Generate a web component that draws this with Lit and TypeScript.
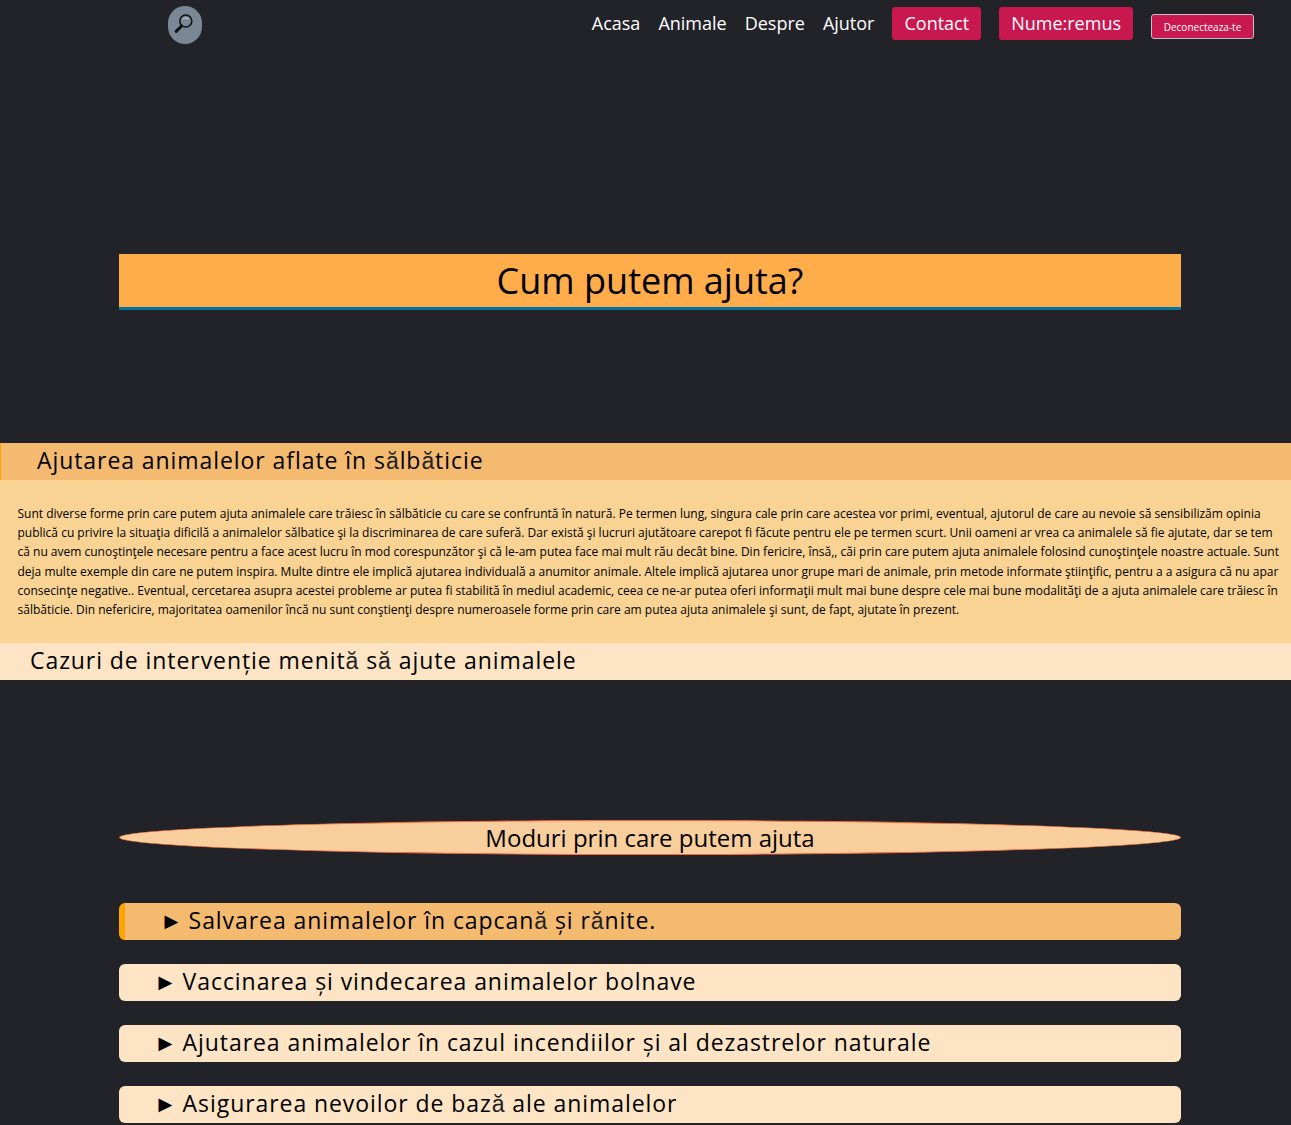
import { LitElement, html, css } from 'lit';
import { customElement } from 'lit/decorators.js';

const PARAGRAPH =
  'Sunt diverse forme prin care putem ajuta animalele care trăiesc în sălbăticie cu care se confruntă în natură. Pe termen lung, singura cale prin care acestea vor primi, eventual, ajutorul de care au nevoie să sensibilizăm opinia publică cu privire la situaţia dificilă a animalelor sălbatice şi la discriminarea de care suferă. Dar există şi lucruri ajutătoare carepot fi făcute pentru ele pe termen scurt. Unii oameni ar vrea ca animalele să fie ajutate, dar se tem că nu avem cunoştinţele necesare pentru a face acest lucru în mod corespunzător şi că le-am putea face mai mult rău decât bine. Din fericire, însă,, căi prin care putem ajuta animalele folosind cunoştinţele noastre actuale. Sunt deja multe exemple din care ne putem inspira. Multe dintre ele implică ajutarea individuală a anumitor animale. Altele implică ajutarea unor grupe mari de animale, prin metode informate ştiinţific, pentru a a asigura că nu apar consecinţe negative.. Eventual, cercetarea asupra acestei probleme ar putea fi stabilită în mediul academic, ceea ce ne-ar putea oferi informaţii mult mai bune despre cele mai bune modalităţi de a ajuta animalele care trăiesc în sălbăticie. Din nefericire, majoritatea oamenilor încă nu sunt conştienţi despre numeroasele forme prin care am putea ajuta animalele şi sunt, de fapt, ajutate în prezent.';

const WAYS = [
  'Salvarea animalelor în capcană și rănite.',
  'Vaccinarea și vindecarea animalelor bolnave',
  'Ajutarea animalelor în cazul incendiilor și al dezastrelor naturale',
  'Asigurarea nevoilor de bază ale animalelor',
];

// the headings show ă in a thinner fallback face
const withFallback = (text: string) =>
  text.split(/(ă)/).map((part) => (part === 'ă' ? html`<span class="alt">ă</span>` : part));

@customElement('app-root')
export class AppRoot extends LitElement {
  static styles = css`
    :host {
      display: block;
      min-height: 1125px;
      background: #222329;
      font-family: 'Open Sans', sans-serif;
      color: #000;
      overflow: hidden;
    }

    /* nav */
    .nav {
      display: flex;
      align-items: center;
      height: 48px;
      padding: 1px 37px 0 168px;
    }
    .search {
      width: 34px;
      height: 38px;
      border-radius: 17px;
      background: #7a8794;
      display: flex;
      align-items: center;
      justify-content: center;
    }
    .links {
      margin-left: auto;
      margin-bottom: 4px;
      display: flex;
      align-items: center;
      gap: 18px;
      color: #fff;
      font-size: 18px;
    }
    .pill {
      background: #c9184f;
      border-radius: 3px;
      padding: 5px 12px;
      line-height: 23px;
    }
    .logout {
      background: #c9184f;
      color: #fff;
      border: 1px solid #c0c0c0;
      border-radius: 3px;
      font-family: inherit;
      font-size: 10px;
      width: 103px;
      height: 25px;
      padding: 0;
      margin-top: 7px;
    }

    /* title */
    .title {
      margin: 205px 110px 0 119px;
      height: 53px;
      background: #ffac4a;
      border-bottom: 3px solid #04749c;
      font-size: 36px;
      font-weight: 400;
      line-height: 54px;
      text-align: center;
    }

    /* section rows */
    .row {
      height: 37px;
      line-height: 35px;
      font-size: 23px;
      letter-spacing: 0.93px;
      white-space: nowrap;
      box-sizing: border-box;
    }
    .alt {
      font-family: 'Liberation Sans', sans-serif;
      font-weight: 400;
      color: #222;
    }
    .active {
      margin-top: 133px;
      background: #f3ba70;
      border-left: 1px solid #ffa500;
      padding-left: 36px;
    }
    .panel {
      background: #f8d393;
      font-size: 12px;
      line-height: 19.2px;
      padding: 24px 10px 24px 17.5px;
      height: 163px;
      box-sizing: border-box;
    }
    .panel p {
      margin: 0;
    }
    .idle {
      background: #fce4c4;
      padding-left: 30px;
    }

    /* ellipse heading */
    .oval {
      margin: 140px 110px 0 119px;
      height: 35px;
      box-sizing: border-box;
      border: 1px solid #f9683c;
      border-radius: 50%;
      background: #f8cf9c;
      font-size: 24px;
      line-height: 34px;
      text-align: center;
    }

    /* list of ways */
    .ways {
      margin: 48px 110px 0 119px;
      display: flex;
      flex-direction: column;
      gap: 24px;
    }
    .way {
      background: #fce4c4;
      border-radius: 6px;
      padding-left: 35px;
    }
    .way.open {
      background: #f3ba70;
      border-left: 6px solid #ffa500;
    }
    .marker {
      margin-right: -2px;
    }
  `;

  render() {
    return html`
      <nav class="nav">
        <div class="search">
          <svg width="22" height="22" viewBox="0 0 22 22" fill="none" stroke="#111">
            <circle cx="11.8" cy="7" r="6" stroke-width="1.6" />
            <path d="M7.6 12 2.2 17.4" stroke-width="3" stroke-linecap="round" />
            <path d="M8.8 5q3-2.2 6 0" stroke="#cdd3d9" stroke-width="1" />
          </svg>
        </div>
        <div class="links">
          <span>Acasa</span>
          <span>Animale</span>
          <span>Despre</span>
          <span>Ajutor</span>
          <span class="pill">Contact</span>
          <span class="pill">Nume:remus</span>
          <button class="logout">Deconecteaza-te</button>
        </div>
      </nav>

      <h1 class="title">Cum putem ajuta?</h1>

      <div class="row active">${withFallback('Ajutarea animalelor aflate în sălbăticie')}</div>
      <div class="panel"><p>${PARAGRAPH}</p></div>
      <div class="row idle">${withFallback('Cazuri de intervenție menită să ajute animalele')}</div>

      <div class="oval">Moduri prin care putem ajuta</div>

      <div class="ways">
        ${WAYS.map(
          (w, i) =>
            html`<div class="row way ${i === 0 ? 'open' : ''}"><span class="marker">►</span> ${withFallback(w)}</div>`
        )}
      </div>
    `;
  }
}
